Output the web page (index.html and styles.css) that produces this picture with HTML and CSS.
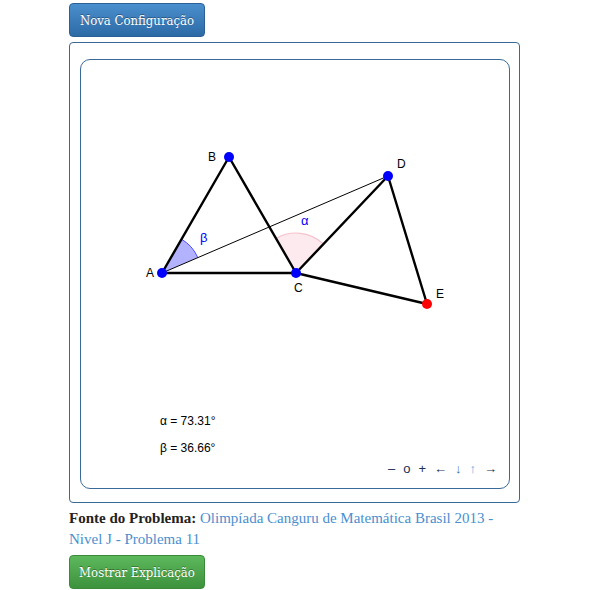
FILE: index.html
```html
<!DOCTYPE html>
<html>
<head>
<meta charset="utf-8">
<link rel="stylesheet" href="styles.css">
</head>
<body>
<div class="page">
  <button class="btn btn-blue">Nova Configuração</button>
  <div class="outer">
    <div class="applet">
      <svg class="canvas" width="430" height="430" viewBox="0 0 430 430" xmlns="http://www.w3.org/2000/svg">
        <path d="M82,214 L117.8,198.6 A39,39 0 0 0 101.5,180.2 Z" fill="rgba(0,0,255,0.3)" stroke="none"/>
        <path d="M117.8,198.6 A39,39 0 0 0 101.5,180.2" fill="none" stroke="#4d4dff" stroke-width="1"/>
        <path d="M216,214 L243.5,185 A40,40 0 0 0 196,179.4 Z" fill="rgba(240,60,100,0.11)" stroke="none"/>
        <path d="M243.5,185 A40,40 0 0 0 196,179.4" fill="none" stroke="#f6c3ce" stroke-width="1.2"/>
        <line x1="82" y1="214" x2="308" y2="117" stroke="#000" stroke-width="1"/>
        <g stroke="#000" stroke-width="2.4" stroke-linecap="round">
          <line x1="82" y1="214" x2="149" y2="98"/>
          <line x1="149" y1="98" x2="216" y2="214"/>
          <line x1="82" y1="214" x2="216" y2="214"/>
          <line x1="216" y1="214" x2="308" y2="117"/>
          <line x1="308" y1="117" x2="347" y2="245"/>
          <line x1="216" y1="214" x2="347" y2="245"/>
        </g>
        <circle cx="82" cy="214" r="5" fill="#0000ff"/>
        <circle cx="149" cy="98" r="5" fill="#0000ff"/>
        <circle cx="216" cy="214" r="5" fill="#0000ff"/>
        <circle cx="308" cy="117" r="5" fill="#0000ff"/>
        <circle cx="347" cy="245" r="5" fill="#ff0000"/>
        <g class="lbl">
          <text x="66" y="218">A</text>
          <text x="128" y="102">B</text>
          <text x="214" y="233">C</text>
          <text x="317" y="109">D</text>
          <text x="356" y="239">E</text>
        </g>
        <g class="lbl ang">
          <text x="221" y="166">α</text>
          <text x="120" y="183">β</text>
        </g>
        <g class="lbl val">
          <text x="80" y="366">α = 73.31°</text>
          <text x="80" y="393">β = 36.66°</text>
        </g>
      </svg>
      <div class="nav">
        <span class="n-dark">–</span>
        <span class="n-dark">o</span>
        <span class="n-dark">+</span>
        <span class="n-dark">←</span>
        <span class="n-mid">↓</span>
        <span class="n-light">↑</span>
        <span class="n-dark">→</span>
      </div>
    </div>
  </div>
  <p class="source"><b>Fonte do Problema:</b> <a href="#">Olimpíada Canguru de Matemática Brasil 2013 - Nivel J - Problema 11</a></p>
  <button class="btn btn-green">Mostrar Explicação</button>
</div>
</body>
</html>
```
FILE: styles.css
```css
html, body {
  margin: 0;
  padding: 0;
  background: #fff;
}
.page {
  width: 451px;
  margin-left: 69px;
  padding-top: 3px;
  font-family: "Liberation Serif", serif;
}
.btn {
  display: block;
  width: 136px;
  height: 34px;
  padding: 0;
  border-radius: 4px;
  font-family: "DejaVu Serif", serif;
  font-stretch: condensed;
  font-size: 13px;
  color: #fff;
  text-shadow: 0 -1px 0 rgba(0,0,0,0.35);
  cursor: pointer;
}
.btn-blue {
  background: linear-gradient(#4a8fcd, #2c6aa5);
  border: 1px solid #2a6095;
}
.btn-green {
  background: linear-gradient(#5db85c, #3d923d);
  border: 1px solid #3a8a3a;
}
.outer {
  margin-top: 5px;
  border: 1px solid #3b6a9a;
  border-radius: 4px;
  padding: 16px 9px 13px 10px;
}
.applet {
  position: relative;
  width: 428px;
  height: 428px;
  border: 1px solid #3b6a9a;
  border-radius: 10px;
}
.canvas {
  position: absolute;
  left: -1px;
  top: -1px;
}
.lbl text {
  font-family: "Liberation Sans", sans-serif;
  font-size: 12px;
  fill: #000;
}
.lbl.ang text {
  fill: #0000ff;
  font-size: 13px;
}
.nav {
  position: absolute;
  right: 12px;
  bottom: 12px;
  display: flex;
  gap: 8px;
  font-family: "Liberation Sans", sans-serif;
  font-size: 13px;
}
.n-dark { color: #1a2f55; }
.n-mid { color: #3b6fb0; }
.n-light { color: #5aa4e0; }
.source {
  margin: 5px 0 5px;
  font-size: 15px;
  line-height: 21px;
  color: #222;
}
.source a {
  color: #4a8fd0;
  text-decoration: none;
}
```
